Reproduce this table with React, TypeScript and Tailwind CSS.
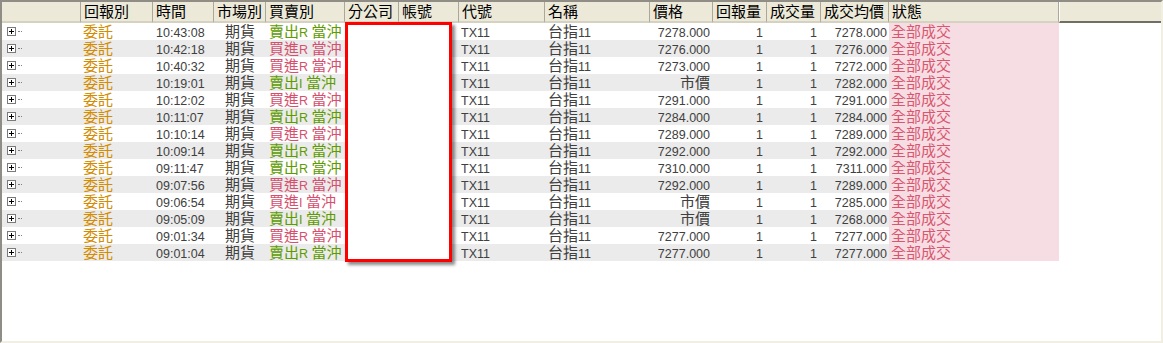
import React from 'react';

interface Order {
  time: string;
  side: string;
  price: string;
  avg: string;
}

const orders: Order[] = [
  { time: '10:43:08', side: '賣出R 當沖', price: '7278.000', avg: '7278.000' },
  { time: '10:42:18', side: '買進R 當沖', price: '7276.000', avg: '7276.000' },
  { time: '10:40:32', side: '買進R 當沖', price: '7273.000', avg: '7272.000' },
  { time: '10:19:01', side: '賣出I 當沖', price: '市價', avg: '7282.000' },
  { time: '10:12:02', side: '買進R 當沖', price: '7291.000', avg: '7291.000' },
  { time: '10:11:07', side: '賣出R 當沖', price: '7284.000', avg: '7284.000' },
  { time: '10:10:14', side: '買進R 當沖', price: '7289.000', avg: '7289.000' },
  { time: '10:09:14', side: '賣出R 當沖', price: '7292.000', avg: '7292.000' },
  { time: '09:11:47', side: '賣出R 當沖', price: '7310.000', avg: '7311.000' },
  { time: '09:07:56', side: '買進R 當沖', price: '7292.000', avg: '7289.000' },
  { time: '09:06:54', side: '買進I 當沖', price: '市價', avg: '7285.000' },
  { time: '09:05:09', side: '賣出I 當沖', price: '市價', avg: '7268.000' },
  { time: '09:01:34', side: '買進R 當沖', price: '7277.000', avg: '7277.000' },
  { time: '09:01:04', side: '賣出R 當沖', price: '7277.000', avg: '7277.000' },
];

const headers = [
  { label: '', w: 'w-[79px]' },
  { label: '回報別', w: 'w-[72px]' },
  { label: '時間', w: 'w-[61px]' },
  { label: '市場別', w: 'w-[52px]' },
  { label: '買賣別', w: 'w-[79px]' },
  { label: '分公司', w: 'w-[54px]' },
  { label: '帳號', w: 'w-[60px]' },
  { label: '代號', w: 'w-[86px]' },
  { label: '名稱', w: 'w-[105px]' },
  { label: '價格', w: 'w-[63px]' },
  { label: '回報量', w: 'w-[54px]' },
  { label: '成交量', w: 'w-[54px]' },
  { label: '成交均價', w: 'w-[68px]' },
  { label: '狀態', w: 'w-[170px]' },
];

// CJK glyphs run a bit larger than the latin ones in this grid
function Txt({ s }: { s: string }) {
  const parts = s.split(/([\u2E80-\u9FFF\uFF00-\uFFEF]+)/);
  return (
    <>
      {parts.map((p, i) =>
        p ? (
          <span key={i} className={/[\u2E80-\u9FFF]/.test(p) ? 'text-[15px]' : 'text-[12.5px]'}>
            {p}
          </span>
        ) : null
      )}
    </>
  );
}

function Expander() {
  return (
    <div className="flex items-center pl-[5px] h-full">
      <div className="w-[9px] h-[9px] border border-[#7a7a7a] bg-white flex items-center justify-center relative">
        <div className="absolute w-[5px] h-px bg-black" />
        <div className="absolute w-px h-[5px] bg-black" />
      </div>
      <div className="ml-[2px] w-[4px] border-t border-dotted border-[#808080]" />
    </div>
  );
}

export default function App() {
  return (
    <div className="relative w-[1163px] h-[343px] bg-white border-t-2 border-l-2 border-t-[#8f8d85] border-l-[#8f8d85] border-r-2 border-b-2 border-r-[#f1efe2] border-b-[#f1efe2] font-['Liberation_Sans','Noto_Sans_CJK_TC',sans-serif] overflow-hidden">
      <div className="flex h-[21px] bg-[#ECE9D8]">
        {headers.map((h, i) => (
          <div
            key={i}
            className={`${h.w} shrink-0 h-full flex items-center pl-[3px] text-black leading-[19px] border-r border-r-[#aca899] border-b-2 border-b-[#d6d2c2] whitespace-nowrap overflow-hidden`}
          >
            <Txt s={h.label} />
          </div>
        ))}
        <div className="flex-1 h-full border-l border-l-white border-b-2 border-b-[#716f64]" />
      </div>

      <div className="w-[1057px]">
        {orders.map((o, i) => {
          const sell = o.side.startsWith('賣');
          return (
            <div
              key={i}
              className={`flex h-[17px] leading-[17px] whitespace-nowrap ${i % 2 === 1 ? 'bg-[#EBEBEB]' : 'bg-white'}`}
            >
              <div className="w-[79px] shrink-0">
                <Expander />
              </div>
              <div className="w-[72px] shrink-0 pl-[2px] text-[#D48C00]">
                <Txt s="委託" />
              </div>
              <div className="w-[61px] shrink-0 pl-[3px] text-[#404040]">
                <Txt s={o.time} />
              </div>
              <div className="w-[52px] shrink-0 text-center text-[#404040]">
                <Txt s="期貨" />
              </div>
              <div className={`w-[79px] shrink-0 pl-[3px] overflow-hidden ${sell ? 'text-[#5E9B00]' : 'text-[#D6506E]'}`}>
                <Txt s={o.side} />
              </div>
              <div className="w-[54px] shrink-0" />
              <div className="w-[60px] shrink-0" />
              <div className="w-[86px] shrink-0 pl-[2px] text-[#404040]">
                <Txt s="TX11" />
              </div>
              <div className="w-[105px] shrink-0 pl-[3px] text-[#404040]">
                <Txt s="台指11" />
              </div>
              <div className="w-[63px] shrink-0 pr-[3px] text-right text-[#404040]">
                <Txt s={o.price} />
              </div>
              <div className="w-[54px] shrink-0 pr-[4px] text-right text-[#404040]">
                <Txt s="1" />
              </div>
              <div className="w-[54px] shrink-0 pr-[4px] text-right text-[#404040]">
                <Txt s="1" />
              </div>
              <div className="w-[68px] shrink-0 pr-[2px] text-right text-[#404040]">
                <Txt s={o.avg} />
              </div>
              <div className="w-[170px] shrink-0 pl-[2px] bg-[#F6DDE4] text-[#D9566F]">
                <Txt s="全部成交" />
              </div>
            </div>
          );
        })}
      </div>

      {/* redaction box drawn over the branch / account columns */}
      <div className="absolute left-[343px] top-[20px] w-[107px] h-[240px] bg-white border-[3px] border-[#FF0000] shadow-[3px_3px_3px_rgba(0,0,0,0.45)]" />
    </div>
  );
}
